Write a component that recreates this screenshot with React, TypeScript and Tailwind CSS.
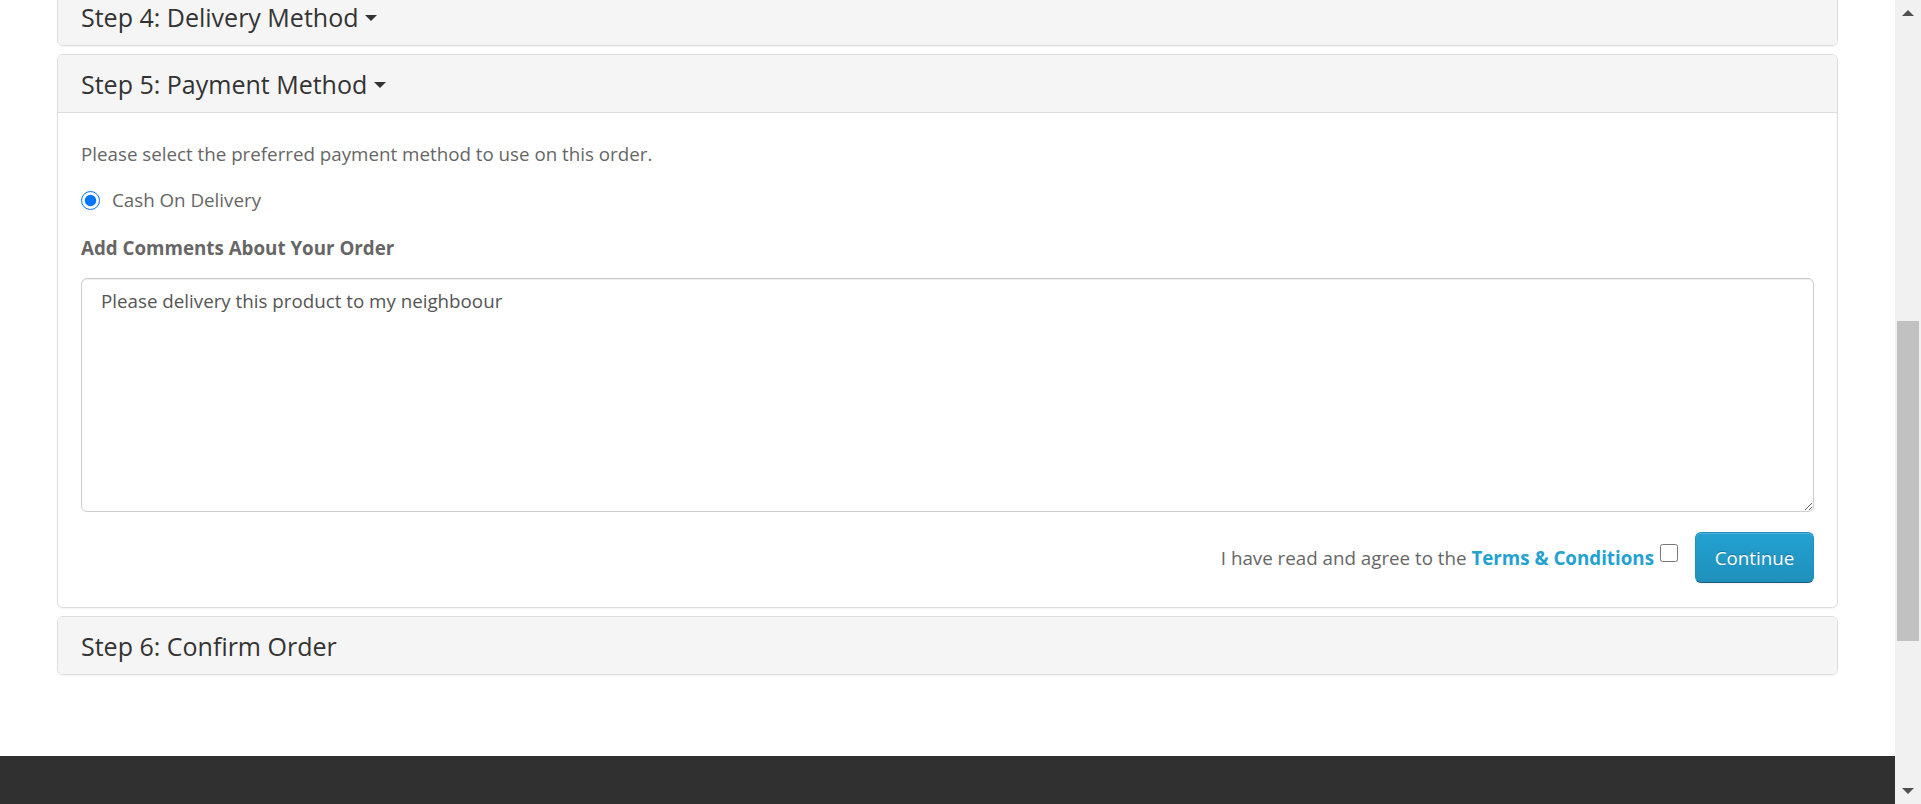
import React from "react";

function Caret() {
  return (
    <svg width="12" height="6" viewBox="0 0 12 6" className="ml-[7px] mt-[2px] inline-block">
      <path d="M0 0 L12 0 L6 6 Z" fill="#333333" />
    </svg>
  );
}

function PanelHeading({ title, caret }: { title: string; caret?: boolean }) {
  return (
    <div className="h-[57px] flex items-center pl-[23px] bg-[#f5f5f5] text-[#333333] text-[25px] leading-[28px]">
      <span>{title}</span>
      {caret && <Caret />}
    </div>
  );
}

function ScrollArrow({ up }: { up?: boolean }) {
  return (
    <div className="h-[26px] flex items-center justify-center">
      <svg width="12" height="6" viewBox="0 0 12 6">
        <path d={up ? "M6 0 L12 6 L0 6 Z" : "M0 0 L12 0 L6 6 Z"} fill="#505050" />
      </svg>
    </div>
  );
}

export default function App() {
  return (
    <div
      className="h-[804px] w-full flex overflow-hidden bg-white"
      style={{ fontFamily: '"Open Sans", "Liberation Sans", sans-serif' }}
    >
      <div className="flex-1 flex flex-col">
        <div className="w-[1781px] mx-auto flex flex-col gap-[8px]">
          {/* Step 4 */}
          <div className="-mt-[13px] border border-[#dddddd] rounded-[6px] overflow-hidden shadow-[0_1px_1px_rgba(0,0,0,0.05)]">
            <PanelHeading title="Step 4: Delivery Method" caret />
          </div>

          {/* Step 5 */}
          <div className="border border-[#dddddd] rounded-[6px] overflow-hidden shadow-[0_1px_1px_rgba(0,0,0,0.05)]">
            <div className="border-b border-[#dddddd]">
              <PanelHeading title="Step 5: Payment Method" caret />
            </div>
            <div className="px-[23px] pt-[28px] pb-[24px] text-[18.75px] leading-[26px] text-[#666666]">
              <p>Please select the preferred payment method to use on this order.</p>
              <label className="mt-[20px] flex items-center">
                <input
                  type="radio"
                  name="payment"
                  defaultChecked
                  className="w-[19px] h-[19px] m-0 accent-[#0075ff]"
                />
                <span className="ml-[12px]">Cash On Delivery</span>
              </label>
              <p className="mt-[22px] font-bold">Add Comments About Your Order</p>
              <textarea
                defaultValue="Please delivery this product to my neighboour"
                className="mt-[17px] block w-full h-[234px] border border-[#cccccc] rounded-[6px] px-[19px] py-[9px] text-[18.75px] leading-[26px] text-[#555555] shadow-[inset_0_1px_1px_rgba(0,0,0,0.075)] outline-none"
              />
              <div className="mt-[20px] flex items-center justify-end">
                <span>
                  I have read and agree to the{" "}
                  <a href="#" className="font-bold text-[#23a1d1]">
                    Terms &amp; Conditions
                  </a>
                </span>
                <input
                  type="checkbox"
                  className="ml-[6px] -mt-[10px] w-[18px] h-[18px]"
                />
                <button className="ml-[17px] h-[51px] w-[119px] rounded-[6px] border border-[#1f90bb] border-b-[#145e7a] bg-gradient-to-b from-[#23a1d1] to-[#1f90bb] text-white text-[18.75px] [text-shadow:0_-1px_0_rgba(0,0,0,0.25)] shadow-[inset_0_1px_0_rgba(255,255,255,0.2),0_1px_2px_rgba(0,0,0,0.05)]">
                  Continue
                </button>
              </div>
            </div>
          </div>

          {/* Step 6 */}
          <div className="border border-[#dddddd] rounded-[6px] overflow-hidden shadow-[0_1px_1px_rgba(0,0,0,0.05)]">
            <PanelHeading title="Step 6: Confirm Order" />
          </div>
        </div>

        <footer className="mt-auto h-[48px] bg-[#303030]" />
      </div>

      {/* browser scrollbar */}
      <div className="w-[26px] h-full bg-[#f1f1f1] flex flex-col">
        <ScrollArrow up />
        <div className="h-[295px]" />
        <div className="h-[320px] mx-[2px] bg-[#c1c1c1]" />
        <div className="flex-1" />
        <ScrollArrow />
      </div>
    </div>
  );
}
